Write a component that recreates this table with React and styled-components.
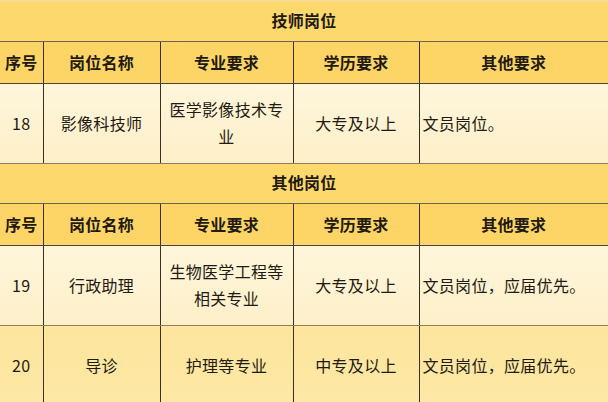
import styled, { createGlobalStyle } from 'styled-components';

const GlobalStyle = createGlobalStyle`
  html, body {
    margin: 0;
    padding: 0;
    background: #fde6a0;
  }
  body {
    font-family: 'Noto Sans CJK SC', 'Noto Sans', sans-serif;
    color: #1f1a12;
  }
`;

const Sheet = styled.table`
  width: 608px;
  border-collapse: collapse;
  table-layout: fixed;
  border-top: 2px solid #f8dc94;
`;

const SectionRow = styled.tr`
  height: 40px;
  background: #fdd86c;
`;

const SectionCell = styled.td`
  text-align: center;
  font-size: 16px;
  font-weight: 700;
  border-bottom: 1.5px solid #6f6450;
  padding: 0 0 3px;
  letter-spacing: 0.3px;
`;

const HeadRow = styled.tr`
  height: 42px;
  background: #fdd566;
`;

const HeadCell = styled.th`
  font-size: 16px;
  font-weight: 700;
  text-align: center;
  padding: 0;
  border-left: 1.5px solid #3a3022;
  border-bottom: 1.5px solid #4e4536;
  letter-spacing: 0.3px;

  &:first-child {
    border-left: none;
  }
`;

const DataRow = styled.tr`
  height: 80px;
  background: ${(p) =>
    p.$tone === 'deep'
      ? 'linear-gradient(#fde59c, #fde8a6)'
      : 'linear-gradient(#fef6dc, #feefc8)'};
`;

const DataCell = styled.td`
  font-size: 16px;
  line-height: 27px;
  text-align: ${(p) => (p.$left ? 'left' : 'center')};
  padding: 0 ${(p) => (p.$left ? '3px' : '4px')};
  border-left: 1.5px solid #3a3022;
  border-bottom: 1.5px solid #8c7f64;
  letter-spacing: 0.3px;
  word-break: break-all;

  &:first-child {
    border-left: none;
    padding: 0;
  }
`;

const columns = [43, 117, 133, 126, 189];
const headers = ['序号', '岗位名称', '专业要求', '学历要求', '其他要求'];

const sections = [
  {
    title: '技师岗位',
    rows: [
      { no: 18, name: '影像科技师', major: '医学影像技术专业', edu: '大专及以上', other: '文员岗位。' },
    ],
  },
  {
    title: '其他岗位',
    rows: [
      { no: 19, name: '行政助理', major: '生物医学工程等相关专业', edu: '大专及以上', other: '文员岗位，应届优先。' },
      { no: 20, name: '导诊', major: '护理等专业', edu: '中专及以上', other: '文员岗位，应届优先。', tone: 'deep' },
    ],
  },
];

const App = () => (
  <>
    <GlobalStyle />
    <Sheet>
      <colgroup>
        {columns.map((w, i) => (
          <col key={i} style={{ width: w }} />
        ))}
      </colgroup>
      <tbody>
        {sections.map((section) => (
          <Section key={section.title} section={section} />
        ))}
      </tbody>
    </Sheet>
  </>
);

const Section = ({ section }) => (
  <>
    <SectionRow>
      <SectionCell colSpan={5}>{section.title}</SectionCell>
    </SectionRow>
    <HeadRow>
      {headers.map((h) => (
        <HeadCell key={h}>{h}</HeadCell>
      ))}
    </HeadRow>
    {section.rows.map((r) => (
      <DataRow key={r.no} $tone={r.tone}>
        <DataCell>{r.no}</DataCell>
        <DataCell>{r.name}</DataCell>
        <DataCell>{r.major}</DataCell>
        <DataCell>{r.edu}</DataCell>
        <DataCell $left>{r.other}</DataCell>
      </DataRow>
    ))}
  </>
);

export default App;
